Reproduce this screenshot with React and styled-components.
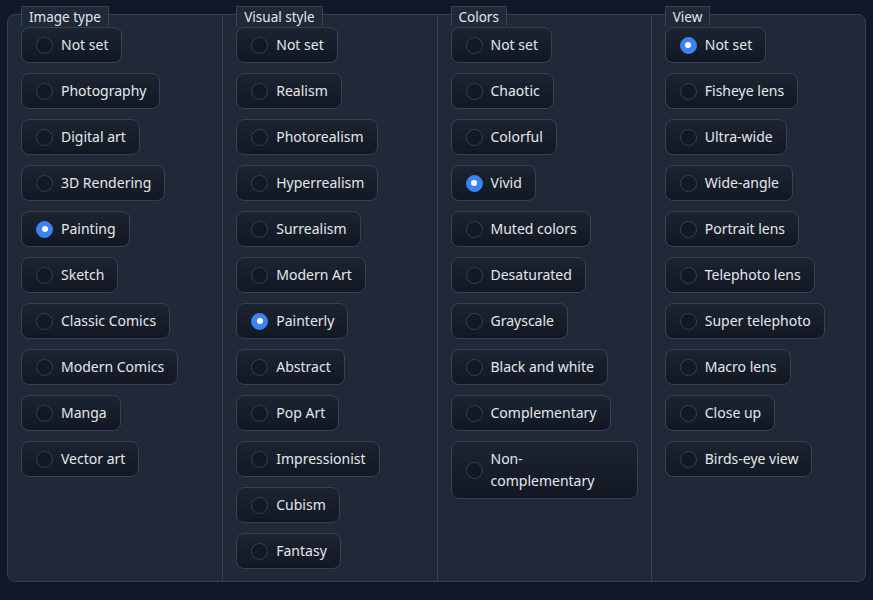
import React from "react";
import styled, { createGlobalStyle } from "styled-components";

const GlobalStyle = createGlobalStyle`
  html, body {
    margin: 0;
    padding: 0;
    background: #111827;
  }
  body {
    font-family: "Noto Sans", "Open Sans", sans-serif;
  }
`;

const Page = styled.div`
  padding: 14px 7px 0;
  height: 600px;
  box-sizing: border-box;
`;

const Panel = styled.div`
  display: grid;
  grid-template-columns: repeat(4, 1fr);
  background: #1f2937;
  border: 1px solid #374151;
  border-radius: 8px;
`;

const Column = styled.div`
  display: flex;
  flex-direction: column;
  align-items: flex-start;
  padding: 0 13px 12px;
  border-left: ${(p) => (p.$first ? "none" : "1px solid #374151")};
  min-width: 0;
`;

const Label = styled.div`
  margin-top: -9px;
  height: 20px;
  padding: 0 7px;
  box-sizing: border-box;
  background: #1f2937;
  border: 1px solid #374151;
  border-bottom: none;
  color: #e5e7eb;
  font-size: 13.5px;
  line-height: 20px;
`;

const Options = styled.div`
  display: flex;
  flex-direction: column;
  align-items: flex-start;
  gap: 10px;
  margin-top: 1px;
  width: 100%;
`;

const Option = styled.label`
  display: inline-flex;
  align-items: center;
  max-width: 100%;
  box-sizing: border-box;
  padding: 6px 13px 6px 14px;
  background: linear-gradient(to bottom, #1c2431, #111823);
  border: 1px solid #374151;
  border-radius: 8px;
  color: #e5e7eb;
  font-size: 14px;
  line-height: 22px;
  cursor: pointer;
`;

const Radio = styled.span`
  flex: none;
  width: 17px;
  height: 17px;
  margin-right: 8px;
  border-radius: 50%;
  box-sizing: border-box;
  border: 1px solid ${(p) => (p.$checked ? "#3b82f6" : "#374151")};
  background: ${(p) => (p.$checked ? "#3b82f6" : "#111827")};
  display: flex;
  align-items: center;
  justify-content: center;
  &::after {
    content: "";
    width: 6px;
    height: 6px;
    border-radius: 50%;
    background: #ffffff;
    display: ${(p) => (p.$checked ? "block" : "none")};
  }
`;

const Text = styled.span`
  min-width: 0;
`;

const groups = [
  {
    label: "Image type",
    selected: "Painting",
    options: [
      "Not set",
      "Photography",
      "Digital art",
      "3D Rendering",
      "Painting",
      "Sketch",
      "Classic Comics",
      "Modern Comics",
      "Manga",
      "Vector art",
    ],
  },
  {
    label: "Visual style",
    selected: "Painterly",
    options: [
      "Not set",
      "Realism",
      "Photorealism",
      "Hyperrealism",
      "Surrealism",
      "Modern Art",
      "Painterly",
      "Abstract",
      "Pop Art",
      "Impressionist",
      "Cubism",
      "Fantasy",
    ],
  },
  {
    label: "Colors",
    selected: "Vivid",
    options: [
      "Not set",
      "Chaotic",
      "Colorful",
      "Vivid",
      "Muted colors",
      "Desaturated",
      "Grayscale",
      "Black and white",
      "Complementary",
      "Non-complementary",
    ],
  },
  {
    label: "View",
    selected: "Not set",
    options: [
      "Not set",
      "Fisheye lens",
      "Ultra-wide",
      "Wide-angle",
      "Portrait lens",
      "Telephoto lens",
      "Super telephoto",
      "Macro lens",
      "Close up",
      "Birds-eye view",
    ],
  },
];

const App = () => {
  return (
    <>
      <GlobalStyle />
      <Page>
        <Panel>
          {groups.map((g, i) => (
            <Column key={g.label} $first={i === 0}>
              <Label>{g.label}</Label>
              <Options>
                {g.options.map((o) => (
                  <Option key={o}>
                    <Radio $checked={o === g.selected} />
                    <Text>{o}</Text>
                  </Option>
                ))}
              </Options>
            </Column>
          ))}
        </Panel>
      </Page>
    </>
  );
};

export default App;
